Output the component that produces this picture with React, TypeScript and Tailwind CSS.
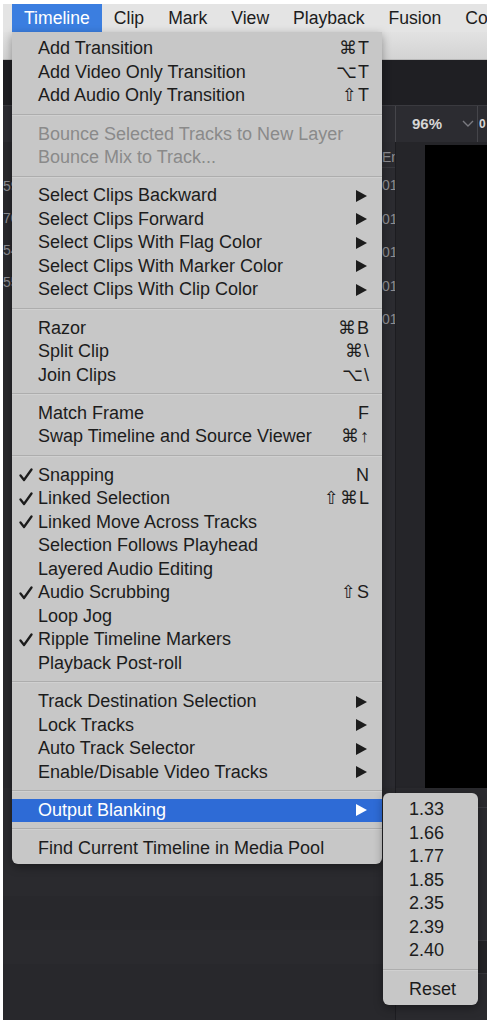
import React from 'react';

type Item =
  | { label: string; shortcut?: string; sub?: boolean; checked?: boolean; disabled?: boolean; active?: boolean }
  | 'sep';

const ITEMS: Item[] = [
  { label: 'Add Transition', shortcut: '⌘T' },
  { label: 'Add Video Only Transition', shortcut: '⌥T' },
  { label: 'Add Audio Only Transition', shortcut: '⇧T' },
  'sep',
  { label: 'Bounce Selected Tracks to New Layer', disabled: true },
  { label: 'Bounce Mix to Track...', disabled: true },
  'sep',
  { label: 'Select Clips Backward', sub: true },
  { label: 'Select Clips Forward', sub: true },
  { label: 'Select Clips With Flag Color', sub: true },
  { label: 'Select Clips With Marker Color', sub: true },
  { label: 'Select Clips With Clip Color', sub: true },
  'sep',
  { label: 'Razor', shortcut: '⌘B' },
  { label: 'Split Clip', shortcut: '⌘\\' },
  { label: 'Join Clips', shortcut: '⌥\\' },
  'sep',
  { label: 'Match Frame', shortcut: 'F' },
  { label: 'Swap Timeline and Source Viewer', shortcut: '⌘↑' },
  'sep',
  { label: 'Snapping', shortcut: 'N', checked: true },
  { label: 'Linked Selection', shortcut: '⇧⌘L', checked: true },
  { label: 'Linked Move Across Tracks', checked: true },
  { label: 'Selection Follows Playhead' },
  { label: 'Layered Audio Editing' },
  { label: 'Audio Scrubbing', shortcut: '⇧S', checked: true },
  { label: 'Loop Jog' },
  { label: 'Ripple Timeline Markers', checked: true },
  { label: 'Playback Post-roll' },
  'sep',
  { label: 'Track Destination Selection', sub: true },
  { label: 'Lock Tracks', sub: true },
  { label: 'Auto Track Selector', sub: true },
  { label: 'Enable/Disable Video Tracks', sub: true },
  'sep',
  { label: 'Output Blanking', sub: true, active: true },
  'sep',
  { label: 'Find Current Timeline in Media Pool' },
];

const RATIOS = ['1.33', '1.66', '1.77', '1.85', '2.35', '2.39', '2.40'];

const font = { fontFamily: '"Liberation Sans", "DejaVu Sans", Arial, sans-serif' };

const Separator = () => (
  <div className="h-[14.8px] flex flex-col justify-center">
    <div className="h-px bg-[#adadad]" />
    <div className="h-px bg-[#d0d0d0]" />
  </div>
);

const Arrow = ({ white }: { white?: boolean }) => (
  <svg width="11" height="12" viewBox="0 0 11 12" className="mr-[3px]">
    <polygon points="0,0 11,6 0,12" fill={white ? '#ffffff' : '#1c1c1c'} />
  </svg>
);

const Check = () => (
  <svg width="14" height="14" viewBox="0 0 14 14">
    <polyline points="1.5,7.5 5,12 12.5,1.5" fill="none" stroke="#1c1c1c" strokeWidth="2.3" strokeLinecap="round" strokeLinejoin="round" />
  </svg>
);

const MenuRow = ({ item }: { item: Exclude<Item, 'sep'> }) => (
  <div
    className={`h-[23.5px] flex items-center pr-[12px] ${
      item.active ? 'bg-[#2e6bd6] text-white' : item.disabled ? 'text-[#8a8a8a]' : 'text-[#1c1c1c]'
    }`}
  >
    <span className="w-[26px] pl-[7px] flex items-center">{item.checked && <Check />}</span>
    <span className="flex-1 whitespace-nowrap">{item.label}</span>
    {item.shortcut && <span className="whitespace-nowrap tracking-[1px]">{item.shortcut}</span>}
    {item.sub && <Arrow white={item.active} />}
  </div>
);

const MENUBAR = ['Timeline', 'Clip', 'Mark', 'View', 'Playback', 'Fusion', 'Col'];

export default function App() {
  return (
    <div className="w-[490px] h-[1024px] bg-white pt-[4px] pl-[3px] pr-[3px] pb-[4px] overflow-hidden" style={font}>
      <div className="relative w-full h-full flex flex-col overflow-hidden text-[17.6px]">
        {/* menu bar */}
        <div className="h-[28px] shrink-0 bg-[#e4e4e4] flex items-stretch pl-[9px] whitespace-nowrap">
          {MENUBAR.map((m, i) => (
            <div
              key={m}
              className={`px-3 flex items-center ${i === 0 ? 'bg-[#3b7ee0] text-white' : 'text-[#1c1c1c]'}`}
            >
              {m}
            </div>
          ))}
        </div>

        {/* window title bar */}
        <div className="h-[28px] shrink-0 bg-gradient-to-b from-[#e2e2e2] to-[#d3d3d3] border-b border-[#b8b8b8]" />

        {/* dark header */}
        <div className="h-[45px] shrink-0 bg-[#1f1f23]" />

        {/* toolbar */}
        <div className="h-[37px] shrink-0 bg-[#2c2c31] border-t border-[#3a3a3f] flex">
          <div className="flex-1" />
          <div className="w-[82px] border-l border-[#45454a] flex items-center pl-[16px] gap-[20px]">
            <span className="text-[15px] font-bold text-[#d6d6d6]">96%</span>
            <svg width="12" height="8" viewBox="0 0 12 8">
              <polyline points="1,1 6,6 11,1" fill="none" stroke="#7a7a80" strokeWidth="1.4" />
            </svg>
          </div>
          <div className="w-[10px] border-l border-[#45454a] flex items-center pl-[1px] text-[12px] font-bold text-[#d6d6d6]">
            0
          </div>
        </div>

        {/* main area */}
        <div className="flex-1 flex flex-col bg-[#28282c]">
          <div className="h-[646px] flex">
            <div className="w-[30px] flex flex-col pt-[36px] gap-[16px] text-[14px] text-[#8d8d92] leading-[16px]">
              <span>59</span>
              <span>70</span>
              <span>54</span>
              <span>55</span>
            </div>
            <div className="flex-1 bg-[#2a2a2e]" />
            <div className="w-[13px] flex flex-col text-[14px] text-[#8d8d92] leading-[16px] bg-[#2b2b30]">
              <div className="h-[26px] flex items-end pb-[2px] border-b border-[#38383d]">En</div>
              <div className="flex flex-col pt-[9px] gap-[17.5px]">
                <span>01</span>
                <span>01</span>
                <span>01</span>
                <span>01</span>
                <span>01</span>
              </div>
            </div>
            <div className="w-[30px] bg-[#252529] border-l border-[#1c1c20]" />
            <div className="w-[62px] pt-[3px] bg-[#252529]">
              <div className="h-full bg-black" />
            </div>
          </div>
          <div className="flex-1 flex">
            <div className="w-[393px] flex flex-col border-r border-[#1d1d21]">
              <div className="h-[108px] bg-[#2a2a2e]" />
              <div className="h-[34px] bg-[#28282c]" />
              <div className="h-[34px] bg-[#2a2a2e]" />
              <div className="flex-1 bg-[#28282c]" />
            </div>
            <div className="flex-1 flex flex-col bg-[#2a2a2e]">
              <div className="h-[20px] border-b border-[#3a3a3f]" />
              <div className="h-[132px]" />
              <div className="h-[34px] bg-[#232327] border-y border-[#36363b]" />
              <div className="flex-1" />
            </div>
          </div>
        </div>

        {/* Timeline menu */}
        <div className="absolute left-[9px] top-[28px] w-[370px] bg-[#c7c7c7] rounded-b-[6px] pt-[5px] pb-[4px] shadow-[0_3px_10px_rgba(0,0,0,0.35)] text-[18px]">
          {ITEMS.map((it, i) => (it === 'sep' ? <Separator key={i} /> : <MenuRow key={i} item={it} />))}
        </div>

        {/* Output Blanking submenu */}
        <div className="absolute left-[380px] top-[789px] w-[95px] bg-[#c7c7c7] rounded-[6px] pt-[5px] pb-[4px] shadow-[0_3px_10px_rgba(0,0,0,0.35)] text-[#1c1c1c] text-[18px]">
          {RATIOS.map((r) => (
            <div key={r} className="h-[23.5px] flex items-center pl-[26px]">
              {r}
            </div>
          ))}
          <Separator />
          <div className="h-[23.5px] flex items-center pl-[26px]">Reset</div>
        </div>
      </div>
    </div>
  );
}
